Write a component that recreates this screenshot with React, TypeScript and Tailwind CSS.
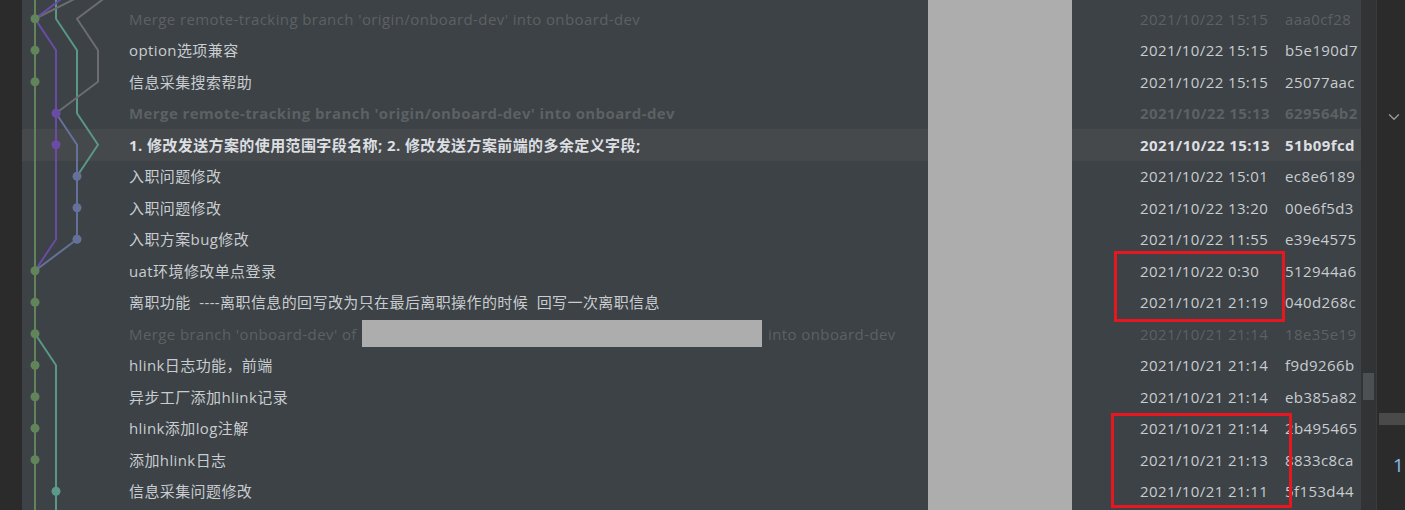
import { ChevronDown } from 'lucide-react';

type Commit = {
    msg: string;
    date: string;
    hash: string;
    dim?: boolean;
    bold?: boolean;
    active?: boolean;
    redacted?: boolean;
};

const commits: Commit[] = [
    { msg: "Merge remote-tracking branch 'origin/onboard-dev' into onboard-dev", date: '2021/10/22 15:15', hash: 'aaa0cf28', dim: true },
    { msg: 'option选项兼容', date: '2021/10/22 15:15', hash: 'b5e190d7' },
    { msg: '信息采集搜索帮助', date: '2021/10/22 15:15', hash: '25077aac' },
    { msg: "Merge remote-tracking branch 'origin/onboard-dev' into onboard-dev", date: '2021/10/22 15:13', hash: '629564b2', dim: true, bold: true },
    { msg: '1. 修改发送方案的使用范围字段名称; 2. 修改发送方案前端的多余定义字段;', date: '2021/10/22 15:13', hash: '51b09fcd', bold: true, active: true },
    { msg: '入职问题修改', date: '2021/10/22 15:01', hash: 'ec8e6189' },
    { msg: '入职问题修改', date: '2021/10/22 13:20', hash: '00e6f5d3' },
    { msg: '入职方案bug修改', date: '2021/10/22 11:55', hash: 'e39e4575' },
    { msg: 'uat环境修改单点登录', date: '2021/10/22 0:30', hash: '512944a6' },
    { msg: '离职功能  ----离职信息的回写改为只在最后离职操作的时候  回写一次离职信息', date: '2021/10/21 21:19', hash: '040d268c' },
    { msg: "Merge branch 'onboard-dev' of", date: '2021/10/21 21:14', hash: '18e35e19', dim: true, redacted: true },
    { msg: 'hlink日志功能，前端', date: '2021/10/21 21:14', hash: 'f9d9266b' },
    { msg: '异步工厂添加hlink记录', date: '2021/10/21 21:14', hash: 'eb385a82' },
    { msg: 'hlink添加log注解', date: '2021/10/21 21:14', hash: '2b495465' },
    { msg: '添加hlink日志', date: '2021/10/21 21:13', hash: '8833c8ca' },
    { msg: '信息采集问题修改', date: '2021/10/21 21:11', hash: '5f153d44' },
];

// row centre in panel coords
const cy = (i: number) => 18.75 + 31.5 * (i - 1);

function Graph() {
    const green = '#62845b';
    const purple = '#6a4ca8';
    const teal = '#5a9784';
    const grey = '#6b6d71';
    const slate = '#66719a';
    const nodes: [number, number, string][] = [
        [13, 1, green], [13, 2, green], [13, 3, green],
        [34, 4, purple], [34, 5, purple],
        [55, 6, slate], [55, 7, slate], [55, 8, slate],
        [13, 9, green], [13, 10, green], [13, 11, green], [13, 12, green],
        [13, 13, green], [13, 14, green], [13, 15, green],
        [34, 16, '#5c998a'],
    ];
    const line = (pts: [number, number][]) => pts.map(p => p.join(',')).join(' ');
    return (
        <svg className="absolute left-0 top-0" width="110" height="510" fill="none" strokeWidth="2" strokeLinejoin="round">
            <polyline points={line([[13, -20], [13, 530]])} stroke={green} />
            <polyline points={line([[34, -20], [34, cy(1)], [55, cy(2)], [55, cy(4)], [76, cy(5)], [55, cy(6)]])} stroke={teal} />
            <polyline points={line([[97, cy(0)], [55, cy(1)], [76, cy(2)], [76, cy(3)], [34, cy(4)]])} stroke={grey} />
            <polyline points={line([[76, cy(0)], [13, cy(1)]])} stroke={grey} />
            <polyline points={line([[55, cy(0)], [13, cy(1)], [34, cy(2)], [34, cy(8)], [13, cy(9)]])} stroke={purple} />
            <polyline points={line([[34, cy(4)], [55, cy(5)], [55, cy(8)], [13, cy(9)]])} stroke={slate} />
            <polyline points={line([[13, cy(11)], [34, cy(12)], [34, 530]])} stroke={teal} />
            {nodes.map(([x, r, c]) => (
                <circle key={r} cx={x} cy={cy(r)} r="4.5" fill={c} />
            ))}
        </svg>
    );
}

export default function App() {
    return (
        <div className="flex h-[510px] w-[1405px] overflow-hidden bg-[#2b2b2b] text-[15px] tracking-[0.4px] font-['Open_Sans','Noto_Sans_CJK_SC',sans-serif]">
            <div className="w-[22px] shrink-0 bg-[#2b2b2b]" />

            {/* Log table */}
            <div className="relative w-[1339px] shrink-0 overflow-hidden bg-[#3c4245] pt-[3px]">
                {commits.map((c, i) => (
                    <div
                        key={i}
                        className={`flex h-[31.5px] items-center ${c.active ? 'bg-[#45494c]' : ''} ${c.bold ? 'font-bold' : ''} ${c.dim ? 'text-[#5c6164]' : c.bold ? 'text-[#dcdfe2]' : 'text-[#c9ccd0]'}`}
                    >
                        <div className="flex flex-1 items-center whitespace-pre pl-[107px]">
                            {c.msg}
                            {c.redacted && (
                                <>
                                    <span className="ml-[5px] mr-[2px] h-[27px] w-[400px] bg-[#adadad]" />
                                    <span> into onboard-dev</span>
                                </>
                            )}
                        </div>
                        <div className="w-[145px] shrink-0 whitespace-pre">{c.date}</div>
                        <div className="w-[76px] shrink-0">{c.hash}</div>
                    </div>
                ))}

                <Graph />

                {/* redacted column */}
                <div className="absolute left-[906px] top-0 h-full w-[144px] bg-[#adadad]" />

                {/* highlight boxes */}
                <div className="absolute left-[1092px] top-[251px] h-[71px] w-[171px] border-[3px] border-[#e8161f]" />
                <div className="absolute left-[1089px] top-[413px] h-[95px] w-[181px] border-[3px] border-[#e8161f]" />
            </div>

            {/* scrollbar */}
            <div className="w-[16px] shrink-0 border-r border-[#393b3d] bg-[#313335] pl-[2px] pt-[373px]">
                <div className="h-[27px] w-[11px] bg-[#4d5052]" />
            </div>

            {/* side panel */}
            <div className="flex flex-1 flex-col bg-[#2b2b2b]">
                <div className="flex h-[126px] items-end justify-end pr-[2px]">
                    <ChevronDown className="h-[18px] w-[18px] text-[#9a9c9e]" strokeWidth={1.75} />
                </div>
                <div className="ml-[2px] mt-[287px] h-[12px] bg-[#4a4a4a]" />
                <div className="mt-[31px] pl-[16px] text-[19px] leading-none tracking-normal text-[#8fbde8]">1</div>
            </div>
        </div>
    );
}
